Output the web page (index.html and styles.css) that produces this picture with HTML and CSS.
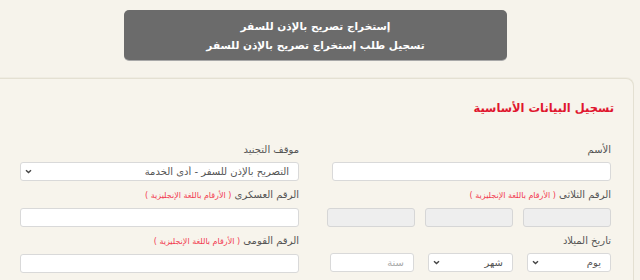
FILE: index.html
```html
<!DOCTYPE html>
<html lang="ar" dir="rtl">
<head>
    <meta charset="UTF-8">
    <title>إستخراج تصريح بالإذن للسفر</title>
    <link rel="stylesheet" href="styles.css">
</head>
<body>
<div class="banner">
    <p>إستخراج تصريح بالإذن للسفر</p>
    <p>تسجيل طلب إستخراج تصريح بالإذن للسفر</p>
</div>

<div class="card">
    <h3 class="card-title">تسجيل البيانات الأساسية</h3>

    <form class="form-grid">
        <div class="field">
            <label>الأسم</label>
            <input type="text" class="box">
        </div>
        <div class="field">
            <label>موقف التجنيد</label>
            <div class="select-wrap">
                <select class="box">
                    <option>التصريح بالإذن للسفر - أدى الخدمة</option>
                </select>
                <svg class="chevron" width="7" height="5" viewBox="0 0 7 5"><path d="M1 1.2 L3.5 3.6 L6 1.2" fill="none" stroke="#444" stroke-width="1.4"/></svg>
            </div>
        </div>

        <div class="field">
            <label>الرقم الثلاثى <span class="note">( الأرقام باللغة الإنجليزية )</span></label>
            <div class="triple">
                <input type="text" class="box locked" disabled>
                <input type="text" class="box locked" disabled>
                <input type="text" class="box locked" disabled>
            </div>
        </div>
        <div class="field">
            <label>الرقم العسكرى <span class="note">( الأرقام باللغة الإنجليزية )</span></label>
            <input type="text" class="box">
        </div>

        <div class="field">
            <label>تاريخ الميلاد</label>
            <div class="birth">
                <div class="select-wrap">
                    <select class="box"><option>يوم</option></select>
                    <svg class="chevron" width="7" height="5" viewBox="0 0 7 5"><path d="M1 1.2 L3.5 3.6 L6 1.2" fill="none" stroke="#444" stroke-width="1.4"/></svg>
                </div>
                <div class="select-wrap">
                    <select class="box"><option>شهر</option></select>
                    <svg class="chevron" width="7" height="5" viewBox="0 0 7 5"><path d="M1 1.2 L3.5 3.6 L6 1.2" fill="none" stroke="#444" stroke-width="1.4"/></svg>
                </div>
                <input type="text" class="box" placeholder="سنة">
            </div>
        </div>
        <div class="field">
            <label>الرقم القومى <span class="note">( الأرقام باللغة الإنجليزية )</span></label>
            <input type="text" class="box">
        </div>
    </form>
</div>
</body>
</html>
```

FILE: styles.css
```css
/* Общие стили */
* {
    margin: 0;
    padding: 0;
    box-sizing: border-box;
    font-family: 'DejaVu Sans', sans-serif;
}

html, body {
    margin: 0;
}

body {
    background: #f6f3eb;
    direction: rtl;
    overflow: hidden;
}

/* Шапка */
.banner {
    width: 383px;
    margin: 10px auto 0 124px;
    padding: 7px 0 5px;
    background: #6b6b6b;
    border-radius: 5px;
    box-shadow: 0 1px 0 #a8a8a8;
    color: #fff;
    text-align: center;
}

.banner p {
    font-size: 10.5px;
    font-weight: bold;
    line-height: 19px;
}

/* Карточка */
.card {
    margin: 18px 6px 0 -10px;
    padding: 21px 22px 8px 0;
    background: #f7f4ec;
    border: 1px solid #e4e0d2;
    border-bottom: none;
    border-radius: 0 8px 0 0;
    box-shadow: 0 -1px 0 #efece2;
}

.card-title {
    margin-right: -3px;
    font-size: 11.5px;
    line-height: 16px;
    color: #e0162e;
}

/* Форма */
.form-grid {
    display: grid;
    grid-template-columns: 279px 279px;
    column-gap: 33px;
    row-gap: 7px;
    margin-top: 27px;
}

.field label {
    display: block;
    font-size: 10px;
    line-height: 14px;
    color: #555;
    margin-bottom: 5px;
}

.note {
    font-size: 8px;
    color: #f23a50;
}

.box {
    display: block;
    width: 100%;
    height: 19px;
    background: #fff;
    border: 1px solid #d9d9d9;
    border-radius: 3px;
    font-size: 10px;
    color: #555;
    padding: 0 9px;
}

.box::placeholder {
    color: #aaa;
}

.box.locked {
    background: #eeeeee;
    border-color: #d6d6d6;
}

.select-wrap {
    position: relative;
}

select.box {
    appearance: none;
    -webkit-appearance: none;
}

.chevron {
    position: absolute;
    left: 5px;
    top: 7px;
}

.triple {
    display: flex;
    gap: 10px;
    margin-left: -5px;
}

.triple .box {
    width: 88px;
}

.birth {
    display: flex;
    gap: 14px;
    margin-left: -2px;
}

.birth > * {
    width: 84px;
}

.birth .select-wrap:nth-child(2) {
    width: 85px;
}
```
